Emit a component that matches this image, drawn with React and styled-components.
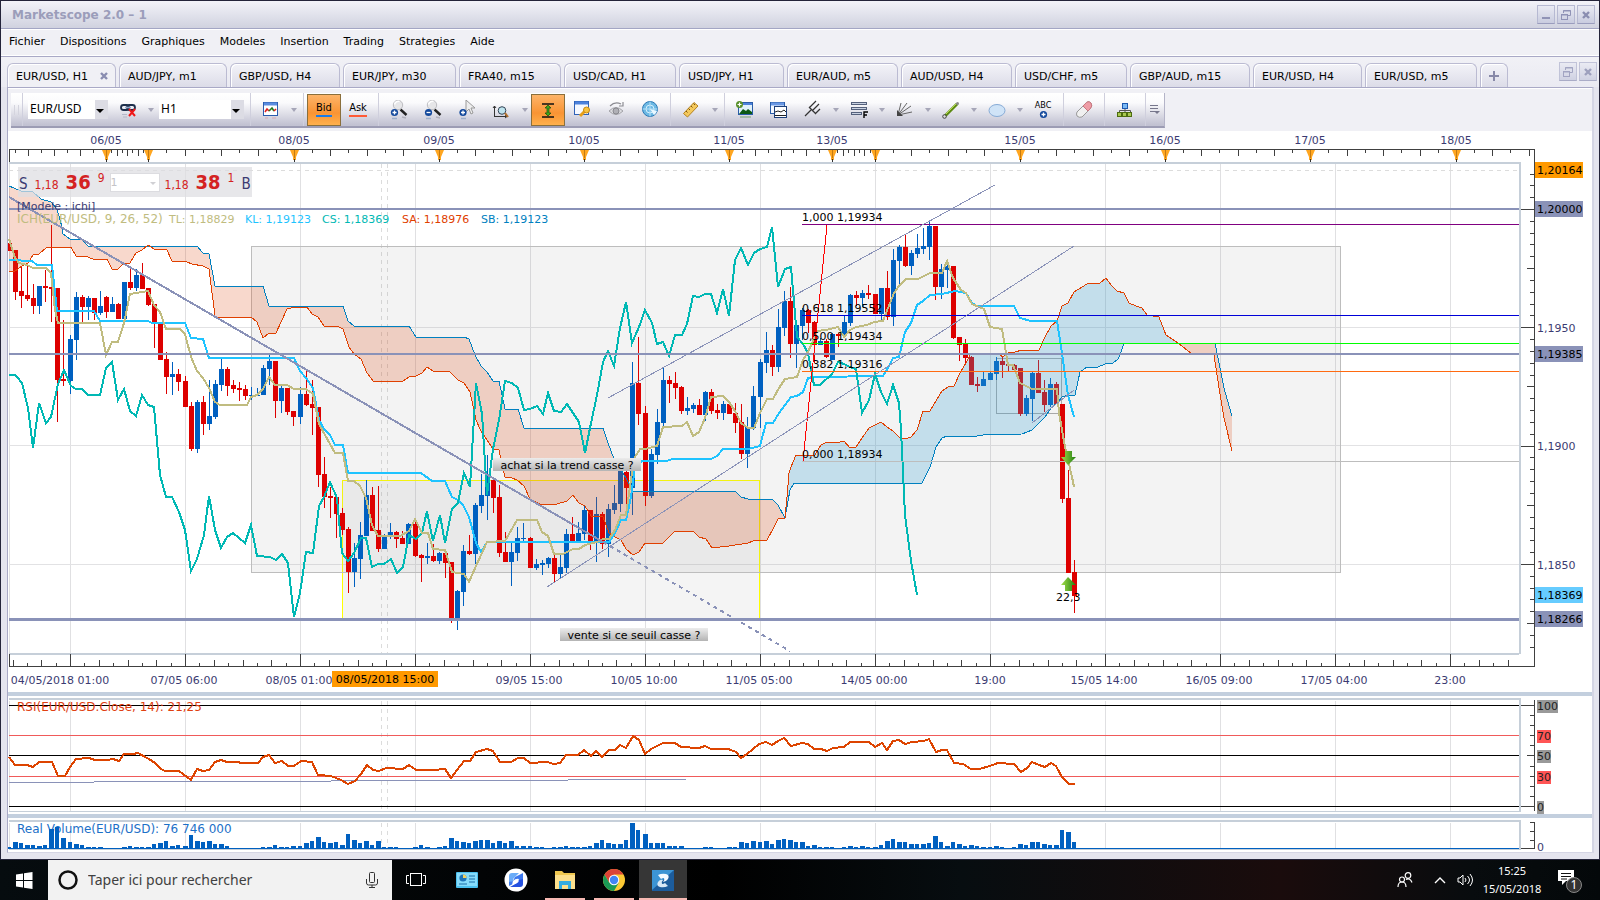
import React from "react";
import styled, { createGlobalStyle, css } from "styled-components";

const UI_FONT = '"DejaVu Sans", Verdana, sans-serif';
const SYS_FONT = '"Noto Sans", "Open Sans", sans-serif';

const Global = createGlobalStyle`
  *, *::before, *::after { box-sizing: border-box; }
  body { margin: 0; background: #000; font-family: ${UI_FONT}; font-size: 11px; color: #000; }
  button, input, select { font: inherit; color: inherit; margin: 0; padding: 0; border: 0; background: none; }
`;

/* ---------- data ---------- */

const MENUS = ["Fichier", "Dispositions", "Graphiques", "Modeles", "Insertion", "Trading", "Strategies", "Aide"];

const TABS = [
  ["EUR/USD, H1", 109], ["AUD/JPY, m1", 108], ["GBP/USD, H4", 110], ["EUR/JPY, m30", 113],
  ["FRA40, m15", 102], ["USD/CAD, H1", 112], ["USD/JPY, H1", 105], ["EUR/AUD, m5", 111],
  ["AUD/USD, H4", 111], ["USD/CHF, m5", 112], ["GBP/AUD, m15", 120], ["EUR/USD, H4", 109], ["EUR/USD, m5", 112],
];

const RED = "#dd0000";
const BLUE = "#0060c0";
const SLATE = "#8a92b8";
const CANDLE_STEP = 6.0526;
const candleX = (k) => Math.floor(9.5 + CANDLE_STEP * k);

/* high, body top, body bottom, low, direction */
const CANDLES = `243,243,251,251,r 250,250,292,300,r 267,291,296,308,r 265,295,299,301,r 284,298,306,314,r 286,286,306,314,b
270,286,288,302,r 225,287,289,322,r 288,288,380,422,r 320,379,381,386,r 335,339,381,394,b 292,297,340,360,b
295,297,307,322,r 296,298,307,320,b 298,298,313,320,r 291,306,313,315,b 296,297,312,318,r 297,304,312,312,b
303,304,319,319,r 282,282,319,319,b 266,282,288,290,r 269,275,288,291,b 263,275,289,289,r 288,288,305,306,r
304,304,323,348,r 323,323,360,360,r 352,359,377,394,r 362,374,377,395,b 369,374,382,391,r 376,381,407,407,r
402,406,449,451,r 400,402,449,453,b 396,402,424,435,r 380,416,424,430,b 380,384,417,419,b 359,369,385,391,b
367,369,386,396,r 380,385,389,393,r 382,388,390,401,r 385,389,396,400,r 387,395,396,400,b 388,395,396,396,b
365,368,395,395,b 355,361,369,385,b 361,361,401,418,r 386,388,401,413,b 388,388,412,415,r 411,411,417,426,r
387,394,417,424,b 370,394,405,406,r 380,404,408,435,r 407,407,475,487,r 457,474,497,508,r 487,496,498,518,r
495,497,514,538,r 508,513,530,535,r 527,529,572,593,r 543,558,572,587,b 522,535,559,579,b 480,495,536,536,b
487,495,531,531,r 486,530,549,552,r 534,536,549,549,b 523,532,536,539,b 531,532,539,548,r 531,538,544,544,r
523,524,544,544,b 521,524,556,557,r 554,555,558,582,r 543,556,558,564,b 544,556,561,562,r 552,553,561,564,b
553,553,563,578,r 562,562,618,623,r 590,591,618,630,b 545,551,592,606,b 535,551,554,555,r 503,505,554,564,b
474,495,506,513,b 455,478,496,520,b 477,480,498,513,r 485,497,553,557,r 532,552,562,562,r 541,552,562,586,b
527,538,553,561,b 523,538,539,541,b 537,538,568,568,r 559,564,568,570,b 560,563,565,575,b 557,558,564,568,b
555,558,574,582,r 555,567,574,579,b 529,534,568,573,b 517,534,541,541,r 522,533,541,541,b 505,510,534,540,b
510,510,541,550,r 497,514,542,562,b 512,514,544,549,r 504,509,544,557,b 485,503,510,514,b 468,471,504,512,b
470,472,488,506,r 362,383,488,515,b 337,383,414,425,r 406,413,496,506,r 449,454,496,498,b 409,422,455,464,b
368,380,423,426,b 376,380,384,403,r 372,383,388,399,r 386,387,411,414,r 397,408,411,415,b 403,405,409,413,b
399,405,415,415,r 391,392,415,421,b 389,392,411,414,r 404,410,413,419,r 401,404,413,420,b 403,404,414,414,r
403,413,423,433,r 404,422,454,459,r 417,427,454,468,b 386,396,428,430,b 359,362,397,428,b 332,350,363,373,b
345,350,367,376,r 309,327,367,372,b 291,301,328,336,b 287,301,344,358,r 324,325,344,368,b 308,310,326,340,b
309,310,323,333,r 321,322,345,363,r 338,341,345,345,b 339,341,357,358,r 333,334,360,360,b 333,334,336,347,r
315,322,334,337,b 294,295,323,326,b 291,295,298,306,r 290,293,298,307,b 285,293,295,299,r 294,294,314,314,r
288,288,314,320,b 271,288,317,320,r 249,260,317,326,b 245,247,261,284,b 235,247,266,267,r 250,253,266,275,b
234,248,254,258,b 228,246,249,254,b 221,226,247,260,b 226,226,287,300,r 264,269,287,299,b 264,266,270,288,b
266,266,338,339,r 337,337,345,361,r 339,344,358,364,r 356,357,385,385,r 377,384,386,392,r 372,379,386,386,b
372,373,380,380,b 357,361,374,380,b 357,361,365,378,r 362,364,366,371,r 364,365,370,371,r 368,368,414,416,r
395,398,414,416,b 371,373,399,421,b 360,373,393,393,r 380,392,405,412,r 378,384,405,407,b 382,384,404,404,r
404,404,499,503,r 470,498,573,573,r 560,572,596,613,r`.split(/\s+/).map((c) => c.split(","));

const VOLUMES = [
  2,7,6,4,4,3,4,20,22,11,7,5,4,2,2,2,1,1,1,2,3,2,2,2,5,6,8,3,4,3,14,8,7,8,5,5,3,1,1,1,1,1,2,2,4,2,2,3,3,6,8,12,7,6,7,4,
  15,9,6,8,4,8,2,2,2,1,1,2,4,2,1,2,3,11,8,7,6,8,9,9,6,8,6,8,3,3,3,2,2,1,2,2,3,2,2,2,3,6,9,6,5,5,9,26,19,15,6,6,6,3,3,3,
  1,1,1,2,2,1,1,2,2,7,6,8,7,8,5,9,10,9,7,7,3,4,2,2,2,1,2,3,2,3,2,2,4,8,10,7,7,5,5,5,6,13,7,3,7,5,3,4,3,2,2,3,2,1,2,5,4,
  7,7,5,4,4,19,17,7,
];

const CHIKOU = "9,375 15,375 17,377 22,383 28,408 33,448 39,403 46,423 51,417 58,384 64,370 71,386 76,389 82,389 88,395 100,395 106,368 112,362 118,400 124,389 130,411 136,416 142,395 148,405 154,407 160,475 166,497 172,497 179,512 185,530 191,571 197,559 204,535 209,496 215,530 221,548 227,537 233,533 245,543 251,525 257,556 270,557 276,560 282,554 288,563 294,617 300,593 306,552 313,553 319,506 324,497 330,482 337,498 342,553 348,561 354,553 361,538 366,538 372,567 378,564 384,564 391,559 397,573 403,567 409,535 416,539 422,533 427,511 433,541 440,515 445,543 452,509 458,503 464,473 470,487 476,383 482,414 487,495 493,449 499,420 505,381 512,383 518,388 524,410 530,409 537,406 543,414 548,393 554,411 561,412 567,404 573,413 579,422 585,453 591,423 597,395 603,362 608,351 614,366 620,328 626,302 632,343 639,327 645,310 652,323 657,344 663,342 669,356 675,335 682,335 687,324 693,296 699,297 705,294 711,294 717,313 723,289 729,316 735,260 741,248 748,265 754,253 760,249 767,247 772,227 778,287 785,269 791,267 797,337 803,344 808,353 814,385 820,385 832,374 838,362 844,364 850,367 856,369 862,413 869,400 875,374 881,392 887,404 893,385 899,403 901,430 905,515 911,561 917,595";
const TENKAN = "9,239 15,258 19,263 27,265 33,268 46,268 51,273 55,310 58,323 100,323 106,355 112,342 118,342 124,323 130,294 136,293 148,291 154,305 160,312 166,329 180,329 185,334 191,357 197,371 203,378 209,388 215,402 220,405 247,405 251,397 257,395 263,389 269,377 275,385 287,385 294,389 306,389 313,394 319,424 325,435 335,453 343,453 348,481 354,481 360,486 366,498 372,525 378,536 400,536 409,531 415,519 422,533 428,533 433,549 445,550 452,572 464,574 469,582 476,566 482,553 487,542 505,541 517,520 537,520 542,532 548,536 554,554 563,554 573,549 579,549 585,545 597,542 603,539 609,539 615,530 621,515 626,515 632,473 635,457 640,449 645,449 657,446 663,427 682,426 687,422 693,436 699,432 705,418 711,397 723,396 729,402 735,411 741,423 748,428 754,428 760,413 767,399 773,399 779,388 785,379 797,377 803,360 808,352 812,343 817,331 826,330 838,327 844,337 850,330 856,327 867,325 874,322 883,321 888,308 894,293 899,286 906,279 918,279 930,273 942,273 947,261 953,278 961,290 966,293 972,304 984,309 990,327 1002,329 1008,365 1013,365 1020,383 1032,389 1057,389 1059,413 1065,447 1072,477 1074,487";
const KIJUN = "9,260 32,261 37,265 52,265 57,311 94,311 100,321 148,321 152,323 185,323 191,338 203,339 209,358 294,358 300,371 306,378 313,388 319,420 324,429 330,435 335,445 343,445 348,473 421,473 432,481 445,481 452,497 458,500 463,505 469,517 476,543 481,552 487,542 609,542 615,533 621,520 626,520 631,497 635,467 642,461 667,461 672,459 711,459 717,456 723,449 748,449 760,446 766,423 773,423 779,413 791,397 797,396 803,392 808,378 813,377 883,376 888,368 893,358 899,357 905,332 911,323 917,305 923,301 930,295 942,294 955,291 966,293 972,303 977,306 1014,306 1020,318 1031,321 1057,321 1062,353 1068,395 1074,417";
const SPAN_A_1 = "9,271 15,271 22,266 28,263 33,255 39,254 46,248 52,247 71,247 76,256 88,257 95,260 107,259 112,269 118,269 124,263 130,263 136,253 142,250 148,245 154,249 167,250 172,261 187,262 192,264 203,266 209,269 215,316 217,317 251,317 257,322 263,338 269,333 276,333 282,320 287,309 295,307 307,307 312,314 318,317 324,326 337,326 343,329 349,347 354,354 361,359 367,373 373,381 403,381 409,377 416,376 422,373 427,367 433,371 450,372 458,380 464,383 470,392 476,420 481,431 487,440 493,449 499,450 505,477 512,478 517,480 524,486 530,499 540,504 557,504 567,501 573,495 579,503 585,506 591,516 603,517 609,533 615,537 621,540 626,549 633,555 639,552 645,543 663,543 675,531 693,531 699,537 706,539 712,548 729,546 748,543 753,541 767,540 773,529 778,519 785,518";
const SPAN_A_2 = "785,518 787,497 789,473 791,467 796,455 815,455 821,445 827,442 840,442 844,441 850,448 856,447 862,438 869,428 875,425 881,422 887,427 893,431 899,437 905,439 911,437 917,430 923,411 930,411 936,401 942,391 948,387 954,386 960,373 966,363 970,355 987,353 997,353 1003,357 1008,353 1015,352 1022,350 1039,350 1045,337 1051,326 1057,321 1062,306 1068,303 1074,292 1087,284 1100,283 1106,278 1111,285 1117,291 1124,293 1129,303 1136,306 1142,308 1147,315 1159,317 1166,335 1178,343";
const SPAN_A_3 = "1178,343 1192,354 1214,355 1219,388 1224,418 1232,451";
const SPAN_B_1 = "9,186 21,191 33,192 41,199 51,202 57,209 62,227 63,234 70,239 82,239 88,246 197,246 203,253 209,254 215,286 263,286 269,306 343,306 348,321 354,326 409,326 416,337 464,337 469,339 475,355 481,366 487,372 493,381 499,381 505,409 518,409 524,428 603,428 608,443 614,459 620,468 627,480 633,491 735,491 741,497 748,499 772,499 778,505 785,518";
const SPAN_B_2 = "785,518 790,490 794,483 922,483 930,467 936,447 942,438 947,436 977,436 983,435 1022,434 1032,430 1038,424 1045,417 1051,408 1057,403 1062,397 1068,395 1075,395 1080,372 1087,367 1098,367 1105,364 1113,363 1118,359 1121,352 1124,343 1178,343";
const SPAN_B_3 = "1178,343 1215,343 1224,388 1232,416";
const RSI = "9,757 15,765 27,765 33,767 39,762 52,762 58,776 65,776 70,767 76,759 89,758 95,760 107,760 113,759 119,761 124,754 133,754 138,753 149,759 155,763 161,769 165,771 179,771 191,780 197,769 203,771 209,770 215,762 221,760 227,762 238,762 241,763 258,763 263,757 269,755 275,763 282,761 288,766 294,766 301,761 312,762 318,775 331,776 341,780 348,784 355,781 361,774 367,765 373,770 379,771 386,768 403,769 409,765 416,770 434,770 445,769 451,778 457,770 464,761 470,761 476,752 487,749 493,751 500,762 511,762 518,758 524,758 530,763 547,762 554,764 560,763 566,755 578,755 584,750 591,756 596,751 602,757 609,750 615,750 620,745 626,748 633,736 639,740 645,754 651,749 663,743 675,743 681,747 699,748 705,746 711,749 728,749 736,752 741,758 747,754 759,744 766,742 772,745 778,741 784,738 791,746 802,743 808,744 814,749 821,749 827,751 833,748 844,747 850,742 869,742 875,747 882,743 887,750 893,741 899,740 905,744 912,742 924,741 929,739 936,752 942,750 947,750 954,763 963,764 971,769 979,769 990,766 998,763 1014,764 1021,772 1027,768 1032,762 1039,765 1045,767 1051,763 1056,766 1062,777 1069,784 1075,784";

const reversed = (points) => points.split(" ").reverse().join(" ");

const DAY_MARKS = [
  [106, "06/05"], [148, ""], [294, "08/05"], [439, "09/05"], [584, "10/05"], [729, "11/05"], [832, "13/05"],
  [875, ""], [1020, "15/05"], [1165, "16/05"], [1310, "17/05"], [1456, "18/05"],
];
const HOUR_LABELS = [
  [60, "04/05/2018 01:00"], [184, "07/05 06:00"], [299, "08/05 01:00"], [529, "09/05 15:00"], [644, "10/05 10:00"],
  [759, "11/05 05:00"], [874, "14/05 00:00"], [990, "19:00"], [1104, "15/05 14:00"], [1219, "16/05 09:00"],
  [1334, "17/05 04:00"], [1450, "23:00"],
];
const GRID_X = Array.from({ length: 13 }, (_, i) => 70 + 115 * i);

const subdivide = (stops) => {
  const out = [];
  for (let i = 0; i < stops.length - 1; i += 1) {
    for (let j = 1; j < 8; j += 1) {
      out.push({ x: Math.round(stops[i] + ((stops[i + 1] - stops[i]) * j) / 8), h: j % 2 ? 3 : 6 });
    }
  }
  return out.filter((t) => t.x > 9 && t.x < 1534);
};
const TOP_TICKS = subdivide([2, ...DAY_MARKS.map((d) => d[0]), 1601]);
const BOTTOM_TICKS = subdivide([-45, ...GRID_X, 1565]);

/* ---------- window chrome ---------- */

const Desktop = styled.div`
  min-height: 100vh;
  display: flex;
  flex-direction: column;
`;
const Window = styled.main`
  flex: 1;
  display: flex;
  flex-direction: column;
  border: 1px solid #24243a;
  background: #e4e4ee;
`;
const TitleBar = styled.header`
  display: flex;
  align-items: center;
  justify-content: space-between;
  height: 28px;
  padding: 0 4px 0 11px;
  background: linear-gradient(#f3f3f9, #d0d2df);
  border-bottom: 1px solid #a3a6c4;
`;
const Title = styled.h1`
  margin: 0;
  font-size: 12px;
  line-height: 16px;
  font-weight: bold;
  color: #9b9dba;
`;
const Controls = styled.div`
  display: flex;
  gap: 2px;
`;
const ControlButton = styled.button`
  width: 18px;
  height: 19px;
  display: grid;
  place-items: center;
  background: linear-gradient(#e9eaf3, #c9ccdf);
  border: 1px solid #b6b9d2;
  border-bottom-color: #9a9dbd;
`;
const MenuBar = styled.nav`
  display: flex;
  gap: 15px;
  height: 27px;
  align-items: center;
  padding: 0 8px 2px;
  background: #f0f0f5;
  border-top: 1px solid #fff;
  border-bottom: 1px solid #fff;
`;
const MenuItem = styled.button`
  line-height: 16px;
`;
const TabBar = styled.div`
  display: flex;
  align-items: flex-end;
  justify-content: space-between;
  height: 31px;
  padding: 0 2px 0 6px;
  border-top: 1px solid #a9a9c6;
  background: linear-gradient(#f1f1f6, #eaeaf2);
`;
const Tabs = styled.div`
  display: flex;
  gap: 3px;
`;
const Tab = styled.button`
  display: flex;
  align-items: center;
  flex: none;
  width: ${(p) => p.$w}px;
  height: 24px;
  padding: 1px 8px 0;
  gap: 10px;
  text-align: left;
  white-space: nowrap;
  border: 1px solid #bbbbd2;
  border-bottom: 0;
  border-radius: 6px 6px 0 0;
  box-shadow: inset 1px 1px 0 #fff;
  background: linear-gradient(#f3f3f8, #dcdce8);
  ${(p) => p.$active && css`background: #f0f0f5;`}
  ${(p) => p.$center && css`justify-content: center;`}
  svg { flex: none; }
`;
const TabTools = styled.div`
  display: flex;
  gap: 2px;
  align-self: flex-start;
  padding-top: 5px;
  opacity: 0.8;
`;
const Workspace = styled.section`
  margin: 0 5px 0 6px;
  border: 1px solid #a9a9c6;
  border-width: 1px 2px 1px 1px;
  border-right-color: #d4d5e4;
  border-bottom-color: #d4d5e4;
  background: #fff;
`;

/* ---------- toolbar ---------- */

const ToolbarStrip = styled.div`
  height: 43px;
  padding: 4px 0 0 3px;
  background: #f0f0f5;
  border-top: 1px solid #fff;
`;
const Toolbar = styled.div`
  display: inline-flex;
  height: 35px;
  background: linear-gradient(#fff 0%, #fafafc 30%, #c2c2d2 96%);
  border-bottom: 2px solid #9c9cb4;
  border-right: 1px solid #b4b4c8;
`;
const Grip = styled.span`
  width: 11px;
  margin: 12px 0 11px;
  background: repeating-linear-gradient(90deg, transparent 0 3px, #d4d4de 3px 4px);
`;
const Group = styled.div`
  display: flex;
  align-items: center;
  gap: ${(p) => p.$gap || 0}px;
  padding: 0 3px;
  border-left: 1px solid #cfcfdd;
`;
const Tool = styled.button`
  width: 34px;
  height: 32px;
  display: grid;
  place-items: center;
  ${(p) => p.$on && css`
    background: linear-gradient(#fdb469, #f99434 60%, #ffb04c);
    border: 1px solid #8a6f3c;
  `}
  svg { display: block; }
`;
const Drop = styled.button`
  width: ${(p) => p.$w || 12}px;
  height: 32px;
  display: grid;
  place-items: center;
  &::before {
    content: "";
    border: 3px solid transparent;
    border-top: 4px solid #a6a6b8;
    border-bottom: 0;
  }
`;
const ComboBox = styled.label`
  position: relative;
  display: block;
  width: ${(p) => p.$w}px;
  height: 19px;
  margin: 0 3px 0 2px;
  background: #fff;
  &::after {
    content: "";
    position: absolute;
    right: 4px;
    top: 9px;
    border: 4px solid transparent;
    border-top-color: #000;
    border-bottom: 0;
    pointer-events: none;
  }
`;
const ComboSelect = styled.select`
  appearance: none;
  width: 100%;
  height: 19px;
  padding: 0 14px 2px 2px;
  font-family: ${SYS_FONT};
  font-size: 12px;
  line-height: 16px;
  background: linear-gradient(90deg, transparent calc(100% - 13px), #dcdce4 calc(100% - 13px));
`;
const PriceSide = styled.span`
  padding: 0 0 1px;
  font-family: "DejaVu Sans Condensed", "DejaVu Sans", sans-serif;
  font-size: 11px;
  line-height: 12px;
  border-bottom: 2px solid ${(p) => p.$c};
`;

/* ---------- chart ---------- */

const PanelRow = styled.div`
  position: relative;
  display: grid;
  grid-template-columns: minmax(0, 1fr) 73px;
`;
const Plot = styled.svg`
  display: block;
  width: 100%;
  height: ${(p) => p.$h}px;
  overflow: hidden;
  font-family: ${UI_FONT};
  font-size: 11px;
`;
const Splitter = styled.div`
  height: 4px;
  background: #c3cfde;
`;
const QuoteBox = styled.div`
  position: absolute;
  left: 10px;
  top: 36px;
  display: flex;
  align-items: center;
  width: 234px;
  height: 30px;
  padding: 0 1px;
  background: rgba(222, 222, 226, 0.72);
  color: #3b3b72;
`;
const QuoteSide = styled.button`
  display: flex;
  align-items: baseline;
  gap: 7px;
  font-family: "DejaVu Sans Condensed", "DejaVu Sans", sans-serif;
  font-size: 12px;
  color: #d42222;
`;
const QuoteLetter = styled.span`
  font-size: 15px;
  color: #3b3b72;
`;
const QuoteBig = styled.b`
  font-size: 20px;
  line-height: 26px;
`;
const QuotePip = styled.span`
  align-self: flex-start;
  line-height: 18px;
`;
const LotsBox = styled.label`
  position: relative;
  margin: 0 5px;
  &::after {
    content: "";
    position: absolute;
    right: 4px;
    top: 9px;
    border: 3px solid transparent;
    border-top-color: #d0d0d4;
    border-bottom: 0;
    pointer-events: none;
  }
`;
const Lots = styled.select`
  display: block;
  width: 50px;
  height: 19px;
  appearance: none;
  border: 1px solid #dcdce0;
  background: #fff;
  color: #c4c4c8;
`;

const Note = ({ x, y, w, children }) => (
  <g>
    <rect x={x} y={y} width={w} height="13" fill="url(#note)" />
    <text x={x + w / 2} y={y + 11} textAnchor="middle">{children}</text>
  </g>
);

const PriceTag = ({ y, fill, children }) => (
  <g>
    <rect x="1535" y={y - 8} width="48" height="16" fill={fill} />
    <text x="1537" y={y + 4}>{children}</text>
  </g>
);

const GridLines = ({ y1, y2 }) => (
  <g shapeRendering="crispEdges">
    {[9, ...GRID_X].map((x) => <line key={x} x1={x + 0.5} x2={x + 0.5} y1={y1} y2={y2} stroke="#e0e0e2" />)}
    {[381.5, 387.5].map((x) => <line key={x} x1={x} x2={x} y1={y1} y2={y2} stroke="#dcdcdc" strokeDasharray="4 4" />)}
  </g>
);

const HLine = ({ y, c, w = 1, x = 9 }) => <line x1={x} x2="100%" y1={y} y2={y} stroke={c} strokeWidth={w} />;

function PricePlot() {
  return (
    <Plot $h={561} role="img" aria-label="EUR/USD H1">
      <defs>
        <linearGradient id="note" x2="0" y2="1"><stop stopColor="#ececec" /><stop offset="1" stopColor="#b4b4b4" /></linearGradient>
        <linearGradient id="arrow"><stop stopColor="#a6e04a" /><stop offset="1" stopColor="#1e7d10" /></linearGradient>
      </defs>
      <svg x="-8" y="-131" width="calc(100% + 8px)" height="692" overflow="visible">
        <g fill="#3b3b72" textAnchor="middle">
          {DAY_MARKS.map(([x, t]) => t && <text key={x} x={x} y="144">{t}</text>)}
          {HOUR_LABELS.map(([x, t]) => <text key={x} x={x} y="684">{t}</text>)}
        </g>
        <rect x="332" y="671" width="106" height="16" fill="#ff9900" />
        <text x="385" y="683" textAnchor="middle">08/05/2018 15:00</text>

        <GridLines y1={164} y2={653} />
        <g shapeRendering="crispEdges">
          {[327.5, 445.5, 564.5].map((y) => <HLine key={y} y={y} c="#e2e2e4" />)}
          <line x1="9" x2="100%" y1="170.5" y2="170.5" stroke="#dcdcdc" strokeDasharray="4 4" />
          <HLine y={162.5} c="#c6cfd9" w={2} />
          <HLine y={653.5} c="#c6cfd9" w={2} />
          <HLine y={149.5} c="#404040" />
          <HLine y={666.5} c="#404040" />
          <path d="M9.5 149V162M9.5 654V667" stroke="#404040" />
          {TOP_TICKS.map((t) => <line key={t.x} x1={t.x + 0.5} x2={t.x + 0.5} y1="150" y2={150 + t.h} stroke="#404040" />)}
          {BOTTOM_TICKS.map((t) => <line key={t.x} x1={t.x + 0.5} x2={t.x + 0.5} y1={666 - t.h} y2="666" stroke="#404040" />)}
          {GRID_X.map((x) => <line key={x} x1={x + 0.5} x2={x + 0.5} y1="654" y2="666" stroke="#404040" />)}
        </g>
        {DAY_MARKS.map(([x]) => (
          <g key={x}>
            <path d={`M${x - 4} 150h9l-3 7v3h-3v-3z`} fill="#ffa620" />
            <path d={`M${x + 0.5} 150v8`} stroke="#c47a10" />
            <path d={`M${x + 0.5} 159v3`} stroke="#303030" />
          </g>
        ))}

        <g shapeRendering="crispEdges">
          <rect x="342.5" y="480.5" width="417" height="138" fill="rgba(150,150,150,.1)" stroke="#ffff00" />
          <rect x="251.5" y="246.5" width="1089" height="326" fill="rgba(150,150,150,.11)" stroke="#bdbdbd" />
          <rect x="996.5" y="358.5" width="65" height="55" fill="none" stroke="#a8a8a8" />
        </g>

        <g shapeRendering="crispEdges">
          {CANDLES.map(([hi, top, bottom, lo, dir], k) => {
            const fill = dir === "r" ? RED : BLUE;
            return (
              <g key={k} fill={fill}>
                <rect x={candleX(k)} y={hi} width="1" height={lo - hi} />
                <rect x={candleX(k) - 2} y={top} width="5" height={Math.max(1, bottom - top)} />
              </g>
            );
          })}
        </g>

        <g stroke="none">
          <polygon points={`${SPAN_A_1} ${reversed(SPAN_B_1)}`} fill="rgba(224,72,16,.21)" />
          <polygon points={`${SPAN_A_2} ${reversed(SPAN_B_2)}`} fill="rgba(52,160,210,.25)" />
          <polygon points={`${SPAN_A_3} ${reversed(SPAN_B_3)}`} fill="rgba(224,72,16,.21)" />
        </g>
        <g fill="none" shapeRendering="crispEdges">
          {[SPAN_B_1, SPAN_B_2, SPAN_B_3].map((p) => <polyline key={p} points={p} stroke="#0080c0" />)}
          {[SPAN_A_1, SPAN_A_2, SPAN_A_3].map((p) => <polyline key={p} points={p} stroke="#e04000" />)}
          <polyline points={KIJUN} stroke="#1ec3ff" strokeWidth="2" />
          <polyline points={CHIKOU} stroke="#00b8b4" strokeWidth="2" />
          <polyline points={TENKAN} stroke="#c0bc80" strokeWidth="2" />
        </g>

        <g shapeRendering="crispEdges">
          <HLine y={209} c={SLATE} w={2} />
          <HLine y={354} c={SLATE} w={2} />
          <HLine y={619.5} c={SLATE} w={3} />
          <HLine y={224.5} c="#800080" x={802} />
          <HLine y={315.5} c="#0000d8" x={802} />
          <HLine y={343.5} c="#00ff00" x={802} />
          <HLine y={371.5} c="#ff6a10" x={802} />
          <HLine y={461.5} c="#bdbdbd" x={802} />
          <path d="M827 225L803 461" stroke="#ff0000" />
          <g stroke={SLATE} fill="none">
            <path d="M9 197L603 542" strokeWidth="2" />
            <path d="M603 542L790 651" strokeDasharray="4 4" strokeWidth="2" />
            <path d="M608 398L995 185M547 587L1074 246M1032 423L1074 390" />
          </g>
        </g>
        <text x="802" y="221">1,000 1,19934</text>
        <text x="802" y="312">0,618 1,19552</text>
        <text x="802" y="340">0,500 1,19434</text>
        <text x="802" y="368">0,382 1,19316</text>
        <text x="802" y="458">0,000 1,18934</text>
        <path d="M1065 451h7v6h4l-8 8l-7 -8h4z" fill="url(#arrow)" />
        <path d="M1065 591h7v-6h4l-8 -8l-7 8h4z" fill="url(#arrow)" />
        <text x="1056" y="601">22,3</text>
        <Note x={493} y={458} w={148}>achat si la trend casse ?</Note>
        <Note x={560} y={628} w={148}>vente si ce seuil casse ?</Note>
        <text x="17" y="210" fill="#3b3b72">[Modele : ichi]</text>
        <text x="17" y="223" fill="#c0bc80" fontSize="12">ICH(EUR/USD, 9, 26, 52)</text>
        <text x="169" y="223" fill="#c0bc80">TL: 1,18829</text>
        <text x="245" y="223" fill="#1ec3ff">KL: 1,19123</text>
        <text x="322" y="223" fill="#00b8b4">CS: 1,18369</text>
        <text x="402" y="223" fill="#e04000">SA: 1,18976</text>
        <text x="481" y="223" fill="#0080c0">SB: 1,19123</text>
      </svg>
    </Plot>
  );
}

const PRICE_TICKS = Array.from({ length: 41 }, (_, i) => i - 3);

function PriceAxis() {
  return (
    <Plot $h={561} viewBox="1519 131 73 561" preserveAspectRatio="xMinYMin">
      <g shapeRendering="crispEdges" stroke="#404040">
        <path d="M1520 162V654" stroke="#c6cfd9" strokeWidth="2" />
        <path d="M1519 149.5H1534.5V666.5H1519" fill="none" />
        <path d="M1529.5 150V156" />
        {PRICE_TICKS.map((n) => {
          const y = Math.round(209 + 11.83 * n) + 0.5;
          const len = n % 10 === 0 ? 13 : n % 5 === 0 ? 7 : 4;
          return <line key={n} x1={1534 - len} x2="1534" y1={y} y2={y} />;
        })}
      </g>
      <PriceTag y={170} fill="#ff9900">1,20164</PriceTag>
      <PriceTag y={209} fill={SLATE}>1,20000</PriceTag>
      <PriceTag y={354} fill={SLATE}>1,19385</PriceTag>
      <PriceTag y={595} fill="#66ccff">1,18369</PriceTag>
      <PriceTag y={619} fill={SLATE}>1,18266</PriceTag>
      <g fill="#3b3b72">
        <text x="1537" y="332">1,1950</text>
        <text x="1537" y="450">1,1900</text>
        <text x="1537" y="569">1,1850</text>
      </g>
    </Plot>
  );
}

function RsiPlot() {
  return (
    <Plot $h={118} role="img" aria-label="RSI">
      <svg x="-8" y="-696" width="calc(100% + 8px)" height="814" overflow="visible">
        <GridLines y1={701} y2={812} />
        <g shapeRendering="crispEdges" fill="none">
          <HLine y={699} c="#c6cfd9" w={2} />
          <HLine y={811.5} c="#c6cfd9" w={1} />
          <HLine y={705.5} c="#000" />
          <HLine y={735.5} c="#f05a5a" />
          <HLine y={755.5} c="#000" />
          <HLine y={776.5} c="#f05a5a" />
          <HLine y={806.5} c="#000" />
          <path d="M9 782.5H94M94 781.5H331M331 780.5H568M568 779.5H686" stroke={SLATE} />
          <polyline points={RSI} stroke="#dd4400" strokeWidth="2" />
        </g>
        <text x="17" y="711" fill="#e04010" fontSize="12">RSI(EUR/USD.Close, 14): 21,25</text>
      </svg>
    </Plot>
  );
}

const RSI_LEVELS = [[705, "100", "#999"], [735, "70", "#f55"], [755, "50", "#999"], [776, "30", "#f55"], [806, "0", "#999"]];

function RsiAxis() {
  return (
    <Plot $h={118} viewBox="1519 696 73 118" preserveAspectRatio="xMinYMin">
      <g shapeRendering="crispEdges" stroke="#404040">
        <path d="M1520 698V812" stroke="#c6cfd9" strokeWidth="2" />
        <path d="M1534.5 700V811M1521 705.5H1534M1527 755.5H1534M1521 806.5H1534" />
        {[715, 725, 735, 745, 766, 776, 786, 796].map((y) => <line key={y} x1="1530" x2="1534" y1={y + 0.5} y2={y + 0.5} />)}
      </g>
      {RSI_LEVELS.map(([y, t, c]) => (
        <g key={y}>
          <rect x="1537" y={y - 5} width={7 * t.length} height="13" fill={c} />
          <text x="1537" y={y + 5} fill="#222">{t}</text>
        </g>
      ))}
    </Plot>
  );
}

function VolumePlot() {
  return (
    <Plot $h={34} role="img" aria-label="Real Volume">
      <svg x="-8" y="-818" width="calc(100% + 8px)" height="852" overflow="visible">
        <GridLines y1={823} y2={850} />
        <text x="17" y="833" fill="#1c70c8" fontSize="12">Real Volume(EUR/USD): 76 746 000</text>
        <g shapeRendering="crispEdges">
          <HLine y={821} c="#c6cfd9" w={2} />
          <HLine y={848.5} c={BLUE} />
          <HLine y={849.5} c="#c6cfd9" />
          {VOLUMES.map((h, k) => <rect key={k} x={candleX(k) - 2} y={849 - h} width={k % 2 ? 5 : 4} height={h} fill={BLUE} />)}
        </g>
      </svg>
    </Plot>
  );
}

function VolumeAxis() {
  return (
    <Plot $h={34} viewBox="1519 818 73 34" preserveAspectRatio="xMinYMin">
      <g shapeRendering="crispEdges" stroke="#404040" fill="none">
        <path d="M1520 820V850" stroke="#c6cfd9" strokeWidth="2" />
        <path d="M1530 822.5H1534.5V848.5H1521M1530 831.5H1534M1530 840.5H1534" />
      </g>
      <text x="1537" y="851" fill="#3b3b72">0</text>
    </Plot>
  );
}

/* ---------- toolbar icons ---------- */

const Icon = ({ children, w = 20 }) => <svg width={w} height="20" viewBox={`0 0 ${w} 20`} fill="none">{children}</svg>;
const BlueDot = ({ x, y, minus }) => (
  <g>
    <circle cx={x} cy={y} r="3.6" fill="#12489c" />
    <path d={`M${x - 2} ${y}h4${minus ? "" : `M${x} ${y - 2}v4`}`} stroke="#fff" strokeWidth="1.3" />
  </g>
);
const Lens = ({ minus }) => (
  <Icon>
    <path d="M11.500 9.500l6 5.500" stroke="#222" strokeWidth="2.400" />
    <circle cx="9" cy="5" r="4.700" fill="#e6e6e8" stroke="#bcbcc0" />
    <path d="M5.500 4.500a4 4 0 0 1 5-3" stroke="#fff" strokeWidth="1.500" />
    <path d="M13 17l4 1" stroke="#b0b0bc" strokeWidth="1.500" />
    <BlueDot x={5.5} y={12.5} minus={minus} />
    <path d="M3 18.500h5" stroke="#9fb0cc" strokeWidth="1.500" />
  </Icon>
);

const ICONS = {
  link: (
    <Icon>
      <rect x="3" y="5" width="8" height="5" rx="2.500" stroke="#1d2f4c" strokeWidth="1.800" />
      <rect x="9" y="5" width="8" height="5" rx="2.500" stroke="#1d2f4c" strokeWidth="1.800" />
      <path d="M7 7.500h6" stroke="#8fa6c8" strokeWidth="1.600" />
      <path d="M4 14.500h5M5 17h4" stroke="#b4b8c8" />
      <path d="M11 9l6 7M17 9l-6 7" stroke="#f01818" strokeWidth="2" />
    </Icon>
  ),
  chart: (
    <Icon>
      <rect x="2.500" y="2.500" width="14" height="13" fill="#fff" stroke="#2b5cae" />
      <path d="M3 4h13" stroke="#5a8ce0" strokeWidth="3" />
      <path d="M4 12l2-3l2 2" stroke="#e02020" strokeWidth="1.600" />
      <path d="M8 11l3-3l2 3" stroke="#207820" strokeWidth="1.600" />
      <path d="M13 11l2-2" stroke="#e02020" strokeWidth="1.600" />
      <path d="M4 18h3M11 18h4" stroke="#d8a8b0" />
    </Icon>
  ),
  zoomIn: <Lens />,
  zoomOut: <Lens minus />,
  cursor: (
    <Icon>
      <path d="M9 0v12l3-3l2 5l2-1l-2-5h4z" fill="#eee" stroke="#999" />
      <BlueDot x={6} y={12.5} />
      <path d="M4 18.500h5" stroke="#9fb0cc" strokeWidth="1.500" />
    </Icon>
  ),
  zoomAxis: (
    <Icon>
      <path d="M3.500 6v11M2 8l1.500-2L5 8M3 16.500h13M14 15l2 1.500L14 18" stroke="#333" />
      <circle cx="11" cy="10.500" r="3.800" fill="#bfe4ee" stroke="#345" />
      <path d="M14 13l3 4" stroke="#b2702c" strokeWidth="2" />
    </Icon>
  ),
  fit: (
    <Icon>
      <path d="M4 4h12M4 17h12" stroke="#111" strokeWidth="1.600" />
      <path d="M10 5l3 3h-2v5h2l-3 3l-3-3h2V8H7z" fill="#3ea51c" stroke="#144d08" strokeWidth="0.700" />
    </Icon>
  ),
  key: (
    <Icon>
      <rect x="2.500" y="1.500" width="14" height="13" fill="#f6f9ff" stroke="#2f62b8" />
      <path d="M3 3h13" stroke="#4d82dc" strokeWidth="3" />
      <path d="M8 16l5-5" stroke="#e8a018" strokeWidth="3" />
      <circle cx="14.500" cy="10" r="3" fill="#f9c440" stroke="#c88a10" />
    </Icon>
  ),
  eye: (
    <Icon>
      <path d="M3 11q7-7 14 0q-7 7-14 0z" fill="#dcdce0" stroke="#a2a2a8" />
      <circle cx="10" cy="11" r="3" fill="#b0b0b6" stroke="#88888e" />
      <path d="M4 6q5-5 11-2M17 2v4h-4" stroke="#8c8c92" strokeWidth="1.200" />
    </Icon>
  ),
  radar: (
    <Icon>
      <circle cx="10" cy="9" r="7.500" fill="#6db9e4" stroke="#2c78b4" />
      <circle cx="10" cy="9" r="4" stroke="#d4effc" />
      <path d="M10 1.500v15M2.500 9h15" stroke="#b4dff6" />
      <path d="M10 9l4 6a7 7 0 0 0 3-4z" fill="#eaf8ff" />
    </Icon>
  ),
  ruler: (
    <Icon>
      <path d="M2.500 13.500L13 2.500l4 3.500L6.500 17z" fill="#f4c95c" stroke="#b5821e" />
      <path d="M5 11l1.500 1.500M7.500 8.500L9 10M10 6l1.500 1.500M12.500 3.500L14 5" stroke="#7a5410" />
    </Icon>
  ),
  picture: (
    <Icon>
      <rect x="3.500" y="2.500" width="14" height="12" fill="#dff1fb" stroke="#2a5da8" />
      <path d="M4 14l4-5l3 2l2-2l4 3v2z" fill="#0c5a14" />
      <path d="M4 4h13" stroke="#4d82dc" strokeWidth="2" />
      <circle cx="4.500" cy="4.500" r="3.500" fill="#58902a" />
      <path d="M2.500 4.500h4M4.500 2.500v4" stroke="#fff" strokeWidth="1.200" />
      <path d="M5 17h11" stroke="#a4bca8" strokeWidth="2" />
    </Icon>
  ),
  windows: (
    <Icon>
      <rect x="1.500" y="2.500" width="14" height="11" fill="#f4f8ff" stroke="#2a5da8" />
      <path d="M2 4h13" stroke="#6a98e4" strokeWidth="3" />
      <rect x="5.500" y="6.500" width="12" height="11" fill="#fff" stroke="#1c3f7a" />
      <path d="M6 12l3-1l3 1l3-2l2 2M6 15.500h11" stroke="#222" />
    </Icon>
  ),
  pitchfork: <Icon><path d="M2 16l6-6M6 7l7 7M6 8l7-7M9 11l7-7M12 14l5-5" stroke="#333" strokeWidth="1.200" /></Icon>,
  lines: (
    <Icon>
      {[3, 8, 13].map((y) => (
        <path key={y} d={`M2 ${y + 0.5}h${y === 13 ? 11 : 16}`} stroke="#55617c" strokeWidth="3" />
      ))}
      <path d="M3 3.500h14M3 8.500h14M3 13.500h9" stroke="#c9d2e2" />
      <path d="M15 18v-6h4M15 15h3" stroke="#000" strokeWidth="1.400" />
    </Icon>
  ),
  fan: <Icon><path d="M3 15L6 3M3 15L12 3M3 15L16 6M3 15L17 12" stroke="#666" /><path d="M2 10v6h6z" fill="#444" /></Icon>,
  line: <Icon><path d="M4 16L16 4" stroke="#5c8a12" strokeWidth="3" /><path d="M5 14L15 4" stroke="#b8dc50" /><circle cx="3.500" cy="16.500" r="1.800" fill="#ddd" stroke="#444" /><circle cx="16.500" cy="3.500" r="1.500" fill="#888" /></Icon>,
  ellipse: <Icon><ellipse cx="10" cy="10.500" rx="8" ry="6" fill="#cfe3f7" stroke="#86abd6" /></Icon>,
  eraser: (
    <Icon>
      <path d="M3 12L11 4q3-4 6-1q2 3-1 6L8 17q-3 1-5-1q-1-2 0-4z" fill="#f0f0f0" stroke="#999" />
      <path d="M9 6l2-2q3-4 6-1q2 3-1 6l-2 2z" fill="#ee9ca6" stroke="#c87880" />
    </Icon>
  ),
  tree: (
    <Icon>
      <path d="M10 7v6M4.500 13v-2.500h11V13" stroke="#555" />
      <rect x="7.500" y="3.500" width="5" height="5" fill="#7ab8f4" stroke="#1c58b0" />
      {[2.5, 7.5, 12.5].map((x) => <rect key={x} x={x} y="12.500" width="4" height="4" fill="#a8c850" stroke="#4c6c10" />)}
    </Icon>
  ),
  more: (
    <Icon w={12}><path d="M1 5.500h8M1 8.500h8M1 11.500h5" stroke="#77778c" /><path d="M5 11h6l-3 3z" fill="#77778c" /></Icon>
  ),
};

const AbcText = styled.span`
  font-family: "DejaVu Sans Condensed", "DejaVu Sans", sans-serif;
  font-size: 9px;
  line-height: 9px;
`;
const Stack = styled.span`
  display: flex;
  flex-direction: column;
  align-items: center;
`;

const T = ({ i, on }) => <Tool type="button" $on={on} aria-label={i}>{ICONS[i]}</Tool>;

function ToolbarArea() {
  return (
    <ToolbarStrip>
      <Toolbar role="toolbar">
        <Grip />
        <Group>
          <ComboBox $w={80}><ComboSelect aria-label="Instrument"><option>EUR/USD</option></ComboSelect></ComboBox>
          <T i="link" /><Drop aria-label="link options" />
          <ComboBox $w={85}><ComboSelect aria-label="Période"><option>H1</option></ComboSelect></ComboBox>
        </Group>
        <Group><T i="chart" /><Drop aria-label="chart options" /></Group>
        <Group>
          <Tool type="button" $on><PriceSide $c="#1a7ce8">Bid</PriceSide></Tool>
          <Tool type="button"><PriceSide $c="#ff5a36">Ask</PriceSide></Tool>
        </Group>
        <Group>
          <T i="zoomIn" /><T i="zoomOut" /><T i="cursor" /><T i="zoomAxis" /><Drop $w={13} aria-label="zoom options" />
          <T i="fit" on /><T i="key" /><T i="eye" /><T i="radar" />
        </Group>
        <Group><T i="ruler" /><Drop $w={13} aria-label="ruler options" /></Group>
        <Group>
          <T i="picture" /><T i="windows" />
          {["pitchfork", "lines", "fan", "line", "ellipse"].map((n) => (
            <React.Fragment key={n}><T i={n} /><Drop aria-label={`${n} options`} /></React.Fragment>
          ))}
          <Tool type="button">
            <Stack>
              <AbcText>ABC</AbcText>
              <svg width="9" height="9" viewBox="0 0 9 9"><BlueDot x={4.5} y={4.5} /></svg>
            </Stack>
          </Tool>
        </Group>
        <Group><T i="eraser" /></Group>
        <Group><T i="tree" /></Group>
        <Group>{ICONS.more}</Group>
      </Toolbar>
    </ToolbarStrip>
  );
}

/* ---------- taskbar ---------- */

const Taskbar = styled.footer`
  display: flex;
  height: 40px;
  background: linear-gradient(90deg, #060c0f 0, #000 45%, #070d10 60%, #1a0c0c 80%, #080c0e 92%, #04080a);
  font-family: ${SYS_FONT};
  color: #fff;
`;
const TaskButton = styled.button`
  width: ${(p) => p.$w || 48}px;
  display: grid;
  place-items: center;
  border-bottom: 2px solid ${(p) => (p.$running ? "#f6b8b2" : "transparent")};
  border-top: 2px solid transparent;
  background: ${(p) => (p.$active ? "#363636" : "none")};
`;
const Search = styled.label`
  display: flex;
  align-items: center;
  width: 344px;
  padding: 0 13px 0 10px;
  gap: 10px;
  background: #f2f2f2;
`;
const SearchInput = styled.input`
  flex: 1;
  min-width: 0;
  font-size: 14px;
  line-height: 20px;
  outline: none;
  color: #404040;
  &::placeholder { color: #404040; opacity: 1; }
`;
const Tray = styled.div`
  display: flex;
  align-items: center;
  margin-left: auto;
  padding-right: 10px;
`;
const TrayButton = styled.button`
  width: ${(p) => p.$w}px;
  height: 40px;
  display: grid;
  place-items: center;
`;
const Clock = styled.time`
  width: 72px;
  text-align: center;
  font-size: 11px;
  line-height: 18px;
`;
const Running = styled.span`
  display: flex;
  gap: 9px;
  padding: 0 5px 0 6px;
`;

function TaskbarArea() {
  return (
    <Taskbar>
      <TaskButton aria-label="Démarrer">
        <svg width="17" height="17"><path d="M0 2.500L7 1.500V8H0zM8 1.300L16.500 0V8H8zM0 9H7V15.500L0 14.500zM8 9H16.500V17L8 15.700z" fill="#fff" /></svg>
      </TaskButton>
      <Search>
        <svg width="20" height="22"><circle cx="10" cy="11" r="8.500" fill="none" stroke="#111" strokeWidth="2.500" /></svg>
        <SearchInput aria-label="Rechercher" placeholder="Taper ici pour rechercher" />
        <svg width="14" height="18" fill="none" stroke="#333"><rect x="4.500" y="1.500" width="5" height="10" rx="1" /><path d="M1.500 8v4q0 2 2 2h7q2 0 2-2V8M7 14v3M4 16.500h6" /></svg>
      </Search>
      <TaskButton aria-label="Vue des tâches">
        <svg width="20" height="16" fill="none" stroke="#fff"><rect x="4.500" y="1.500" width="11" height="12" /><path d="M3 3.500H.500v8H3M17 3.500h2.500v8H17" /></svg>
      </TaskButton>
      <TaskButton $w={53} aria-label="Panneau">
        <svg width="22" height="16"><rect width="22" height="16" rx="1" fill="#4cc0ee" /><rect x="1" y="1" width="20" height="13" fill="#86dbfa" /><circle cx="7" cy="6" r="3.600" fill="#1f74b8" /><path d="M7 6V2.400A3.600 3.600 0 0 1 10.600 6z" fill="#f0d060" /><path d="M3 12h8M13 4h6M13 7h6M13 10h6" stroke="#1b6fa8" /></svg>
      </TaskButton>
      <TaskButton $w={46} aria-label="Synchro">
        <svg width="24" height="24">
          <circle cx="12" cy="12" r="11.500" fill="#fff" />
          <path d="M5 8q0-3 3-3h7l-4 4q-2 1-2 4l-4 2z" fill="#6aacf8" />
          <path d="M19 9v7q0 3-3 3H6l7-4q2-1 2-4z" fill="#2450e0" />
          <path d="M11 9l8-4v6l-4 1l-4 3l-6 3v-4l4-1z" fill="#3c78ee" />
          <path d="M9 13q3-3 6-2l-2 4l-5 2z" fill="#fff" />
        </svg>
      </TaskButton>
      <Running>
        <TaskButton $w={40} $running aria-label="Explorateur">
          <svg width="22" height="20"><path d="M1 1h7l2 2h11v16H1z" fill="#f0c850" /><path d="M1 5h20v14H1z" fill="#fde08c" /><path d="M5 19v-8h12v8h-3v-4H8v4z" fill="#35ace0" /></svg>
        </TaskButton>
        <TaskButton $w={40} $running aria-label="Chrome">
          <svg width="22" height="22" viewBox="-11 -11 22 22">
            <circle r="11" fill="#fcc934" />
            <path d="M-9.500 -5.500A11 11 0 0 1 9.500 -5.500H0L-4.700 2.700z" fill="#dc4437" />
            <path d="M-9.500 -5.500A11 11 0 0 0 0 11L4.700 2.700L-4.700 2.700z" fill="#1a9a55" />
            <circle r="5.200" fill="#fff" /><circle r="4.200" fill="#4285f4" />
          </svg>
        </TaskButton>
      </Running>
      <TaskButton $running $active aria-label="Marketscope">
        <svg width="22" height="21">
          <rect width="22" height="21" fill="#1c5c9c" />
          <path d="M0 0h22L0 20z" fill="#3c94d4" />
          <path d="M6 5q4-2 8-1q4 1 2 5q-2 3-5 3q2-2 1-4q-2 0-3 1z" fill="#f4faff" />
          <path d="M16 16q-4 2-8 1q-4-1-2-5q2-3 5-2q-2 2-1 4q2 0 3-1z" fill="#d8e8f6" />
        </svg>
      </TaskButton>
      <Tray>
        <TrayButton $w={42} aria-label="Contacts">
          <svg width="16" height="16" fill="none" stroke="#fff" strokeWidth="1.200"><circle cx="11" cy="3.500" r="2.800" /><circle cx="5" cy="7.500" r="2.500" /><path d="M1 15q0-5 4-5t4 5M9 7.500q4-2 6 3" /></svg>
        </TrayButton>
        <TrayButton $w={28} aria-label="Icônes cachées">
          <svg width="12" height="8" fill="none" stroke="#fff" strokeWidth="1.400"><path d="M1 7l5-5l5 5" /></svg>
        </TrayButton>
        <TrayButton $w={22} aria-label="Volume">
          <svg width="17" height="14" fill="none" stroke="#fff"><path d="M1 5h2l3-3v10L3 9H1zM8 5q2 2 0 4M10.500 3q4 4 0 8M13 1q5 6 0 12" /></svg>
        </TrayButton>
        <Clock>15:25<br />15/05/2018</Clock>
        <TrayButton $w={42} aria-label="Notifications">
          <svg width="26" height="26"><path d="M2 3h16v11H10l-4 4v-4H2z" fill="#fff" /><path d="M5 6.500h10M5 9.500h10M5 12h6" stroke="#111" /><circle cx="18" cy="18" r="7.500" fill="#333" stroke="#888" /><text x="18" y="22" fontSize="12" textAnchor="middle" fill="#fff">1</text></svg>
        </TrayButton>
      </Tray>
    </Taskbar>
  );
}

/* ---------- window buttons ---------- */

const MinIcon = () => <svg width="12" height="12"><path d="M2 9h8" stroke="#9093b6" strokeWidth="2" /></svg>;
const RestoreIcon = () => <svg width="12" height="12" fill="none" stroke="#9093b6"><path d="M3.500 4V1.500h7v5H8M3 2h8" /><rect x="1.500" y="5.500" width="6" height="5" /><path d="M1 6h7" /></svg>;
const CloseIcon = () => <svg width="12" height="12" viewBox="0 0 12 12"><path d="M3 3l6 6M9 3L3 9" stroke="#8a8db0" strokeWidth="2.400" /></svg>;

export default function App() {
  return (
    <Desktop>
      <Global />
      <Window>
        <TitleBar>
          <Title>Marketscope 2.0 – 1</Title>
          <Controls>
            <ControlButton aria-label="Réduire"><MinIcon /></ControlButton>
            <ControlButton aria-label="Restaurer"><RestoreIcon /></ControlButton>
            <ControlButton aria-label="Fermer"><CloseIcon /></ControlButton>
          </Controls>
        </TitleBar>
        <MenuBar>{MENUS.map((m) => <MenuItem key={m}>{m}</MenuItem>)}</MenuBar>
        <TabBar>
          <Tabs role="tablist">
            {TABS.map(([name, w], i) => (
              <Tab key={name} role="tab" $w={w} $active={i === 0} aria-selected={i === 0}>
                {name}{i === 0 && <CloseIcon />}
              </Tab>
            ))}
            <Tab $w={28} $center aria-label="Nouvel onglet">
              <svg width="12" height="12"><path d="M6 1v10M1 6h10" stroke="#8889a8" strokeWidth="2" /></svg>
            </Tab>
          </Tabs>
          <TabTools>
            <ControlButton aria-label="Restaurer le graphique"><RestoreIcon /></ControlButton>
            <ControlButton aria-label="Fermer le graphique"><CloseIcon /></ControlButton>
          </TabTools>
        </TabBar>
        <Workspace>
          <ToolbarArea />
          <PanelRow>
            <PricePlot />
            <PriceAxis />
            <QuoteBox>
              <QuoteSide><QuoteLetter>S</QuoteLetter>1,18<QuoteBig>36</QuoteBig><QuotePip>9</QuotePip></QuoteSide>
              <LotsBox><Lots aria-label="Lots"><option>1</option></Lots></LotsBox>
              <QuoteSide>1,18<QuoteBig>38</QuoteBig><QuotePip>1</QuotePip><QuoteLetter>B</QuoteLetter></QuoteSide>
            </QuoteBox>
          </PanelRow>
          <Splitter />
          <PanelRow><RsiPlot /><RsiAxis /></PanelRow>
          <Splitter />
          <PanelRow><VolumePlot /><VolumeAxis /></PanelRow>
        </Workspace>
      </Window>
      <TaskbarArea />
    </Desktop>
  );
}
